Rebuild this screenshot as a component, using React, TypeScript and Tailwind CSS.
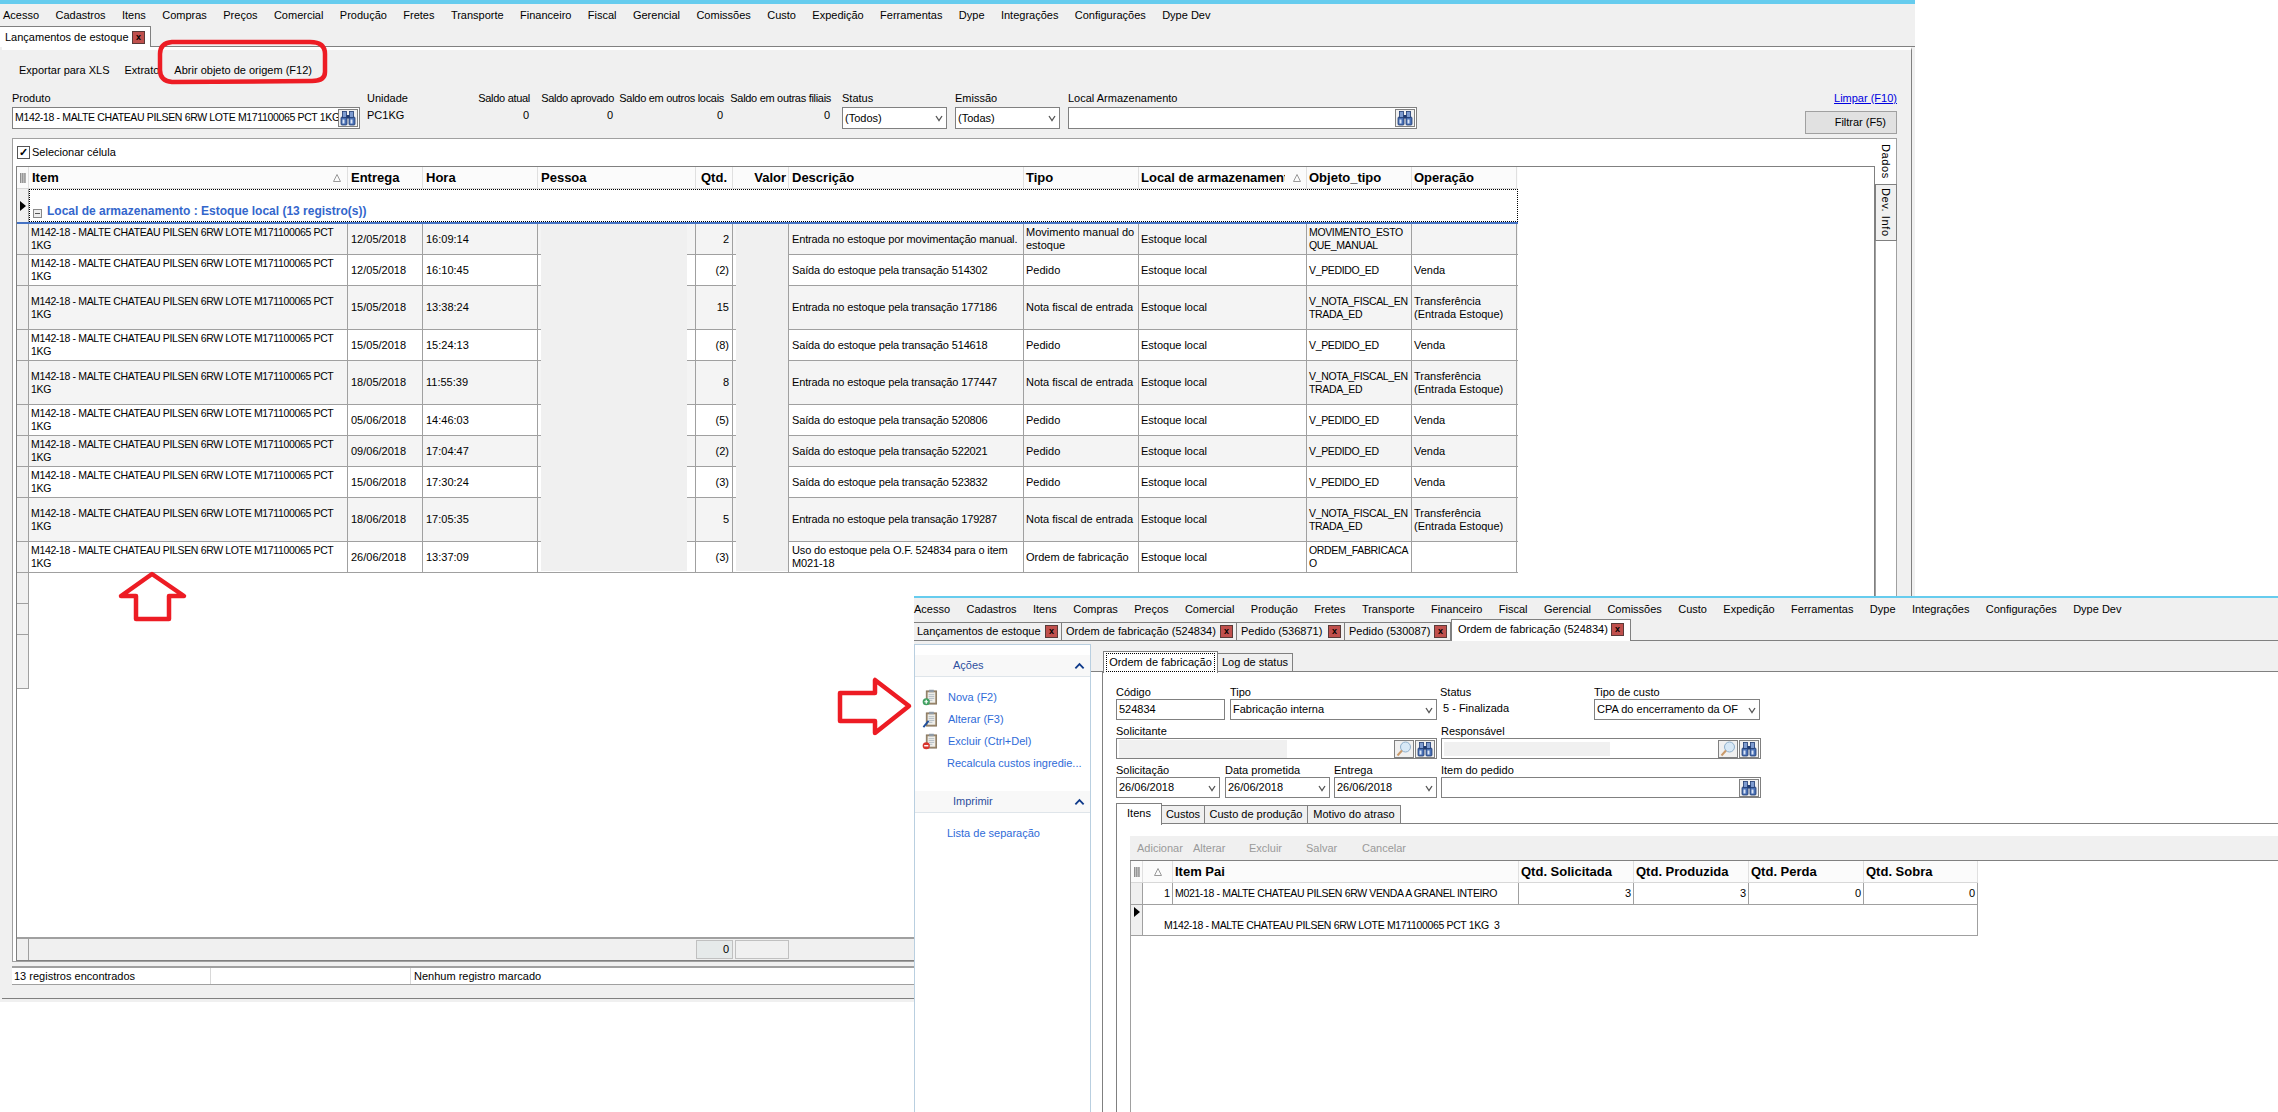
import type { ReactNode } from 'react';

const menuItems = ['Acesso', 'Cadastros', 'Itens', 'Compras', 'Preços', 'Comercial', 'Produção', 'Fretes', 'Transporte', 'Financeiro', 'Fiscal', 'Gerencial', 'Comissões', 'Custo', 'Expedição', 'Ferramentas', 'Dype', 'Integrações', 'Configurações', 'Dype Dev'];

const ITEM = 'M142-18 - MALTE CHATEAU PILSEN 6RW LOTE M171100065 PCT 1KG';

// capitals run wider in this font than in the original one
const CAPS = 'text-[10.5px] tracking-[-0.35px]';

// data of the stock grid
const rows = [
  { tall: false, date: '12/05/2018', time: '16:09:14', qty: '2', desc: 'Entrada no estoque por movimentação manual.', tipo: 'Movimento manual do estoque', obj: 'MOVIMENTO_ESTO\nQUE_MANUAL', op: '' },
  { tall: false, date: '12/05/2018', time: '16:10:45', qty: '(2)', desc: 'Saída do estoque pela transação 514302', tipo: 'Pedido', obj: 'V_PEDIDO_ED', op: 'Venda' },
  { tall: true, date: '15/05/2018', time: '13:38:24', qty: '15', desc: 'Entrada no estoque pela transação 177186', tipo: 'Nota fiscal de entrada', obj: 'V_NOTA_FISCAL_ENTRADA_ED', op: 'Transferência (Entrada Estoque)' },
  { tall: false, date: '15/05/2018', time: '15:24:13', qty: '(8)', desc: 'Saída do estoque pela transação 514618', tipo: 'Pedido', obj: 'V_PEDIDO_ED', op: 'Venda' },
  { tall: true, date: '18/05/2018', time: '11:55:39', qty: '8', desc: 'Entrada no estoque pela transação 177447', tipo: 'Nota fiscal de entrada', obj: 'V_NOTA_FISCAL_ENTRADA_ED', op: 'Transferência (Entrada Estoque)' },
  { tall: false, date: '05/06/2018', time: '14:46:03', qty: '(5)', desc: 'Saída do estoque pela transação 520806', tipo: 'Pedido', obj: 'V_PEDIDO_ED', op: 'Venda' },
  { tall: false, date: '09/06/2018', time: '17:04:47', qty: '(2)', desc: 'Saída do estoque pela transação 522021', tipo: 'Pedido', obj: 'V_PEDIDO_ED', op: 'Venda' },
  { tall: false, date: '15/06/2018', time: '17:30:24', qty: '(3)', desc: 'Saída do estoque pela transação 523832', tipo: 'Pedido', obj: 'V_PEDIDO_ED', op: 'Venda' },
  { tall: true, date: '18/06/2018', time: '17:05:35', qty: '5', desc: 'Entrada no estoque pela transação 179287', tipo: 'Nota fiscal de entrada', obj: 'V_NOTA_FISCAL_ENTRADA_ED', op: 'Transferência (Entrada Estoque)' },
  { tall: false, date: '26/06/2018', time: '13:37:09', qty: '(3)', desc: 'Uso do estoque pela O.F. 524834 para o item M021-18', tipo: 'Ordem de fabricação', obj: 'ORDEM_FABRICACAO', op: '' },
];

const stockCols = 'grid w-[1501px] grid-cols-[12px_319px_75px_115px_158px_37px_56px_235px_115px_168px_105px_105px]';
const itemCols = 'grid w-[847px] grid-cols-[12px_30px_346px_115px_115px_115px_114px]';

const Binoculars = () => (
  <svg viewBox="0 0 16 16" className="h-[16px] w-[16px]">
    <rect x="1" y="7" width="6" height="8" rx="1" fill="#4a70b5" stroke="#1f3a70" strokeWidth="0.8" />
    <rect x="9" y="7" width="6" height="8" rx="1" fill="#4a70b5" stroke="#1f3a70" strokeWidth="0.8" />
    <rect x="2.5" y="1.5" width="4" height="6" fill="#7d9bd0" stroke="#1f3a70" strokeWidth="0.8" />
    <rect x="9.5" y="1.5" width="4" height="6" fill="#7d9bd0" stroke="#1f3a70" strokeWidth="0.8" />
    <rect x="6.5" y="5" width="3" height="3.5" fill="#1f3a70" />
    <rect x="2.5" y="9.5" width="2" height="4" fill="#dbe5f6" />
    <rect x="10.5" y="9.5" width="2" height="4" fill="#dbe5f6" />
  </svg>
);

const Lens = () => (
  <svg viewBox="0 0 16 16" className="h-[16px] w-[16px]">
    <circle cx="9.5" cy="6" r="5" fill="#d7e8f6" stroke="#8fb0cc" strokeWidth="1" />
    <line x1="6" y1="9.5" x2="1.5" y2="14.5" stroke="#c99a6b" strokeWidth="2" />
  </svg>
);

const IconButton = ({ children }: { children: ReactNode }) => (
  <span className="flex h-[18px] w-[20px] shrink-0 items-center justify-center border border-[#808080] bg-[#f0f0f0]">{children}</span>
);

const CloseBox = () => (
  <span className="flex h-[13px] w-[13px] shrink-0 items-center justify-center border border-[#5a3a38] bg-[#c0504d] text-[9px] font-bold leading-none text-black">x</span>
);

const Chevron = () => (
  <svg viewBox="0 0 8 8" className="h-[8px] w-[8px] shrink-0">
    <path d="M1 2 L4 6.5 L7 2" fill="none" stroke="#555" strokeWidth="1.3" />
  </svg>
);

const CurrentRow = () => (
  <svg viewBox="0 0 6 10" className="h-[10px] w-[6px]">
    <polygon points="0,0 6,5 0,10" fill="#000" />
  </svg>
);

const RowsIcon = () => (
  <svg viewBox="0 0 8 10" className="h-[10px] w-[8px]">
    <path d="M1 1h6M1 3h6M1 5h6M1 7h6M1 9h6" stroke="#222" strokeWidth="1" strokeDasharray="1.5 0.6" fill="none" />
  </svg>
);

const SortMark = () => (
  <svg viewBox="0 0 8 8" className="h-[8px] w-[8px] shrink-0">
    <polygon points="4,0.5 7.5,7.5 0.5,7.5" fill="none" stroke="#999" strokeWidth="1" />
  </svg>
);

const Clipboard = ({ badge }: { badge: 'add' | 'edit' | 'remove' }) => (
  <svg viewBox="0 0 18 18" className="h-[17px] w-[17px] shrink-0">
    <rect x="4.5" y="2" width="11" height="14" fill="#a08c70" stroke="#7d6c54" strokeWidth="0.8" />
    <rect x="6" y="3.5" width="8" height="11" fill="#eeeeea" />
    <rect x="7.5" y="0.8" width="5" height="2.6" fill="#8f9aa5" />
    <path d="M7 6h6M7 8h6M7 10h6M7 12h4" stroke="#a5b0bb" strokeWidth="0.8" />
    {badge === 'add' && (
      <>
        <circle cx="4.5" cy="13.5" r="3.8" fill="#3fa060" />
        <path d="M2.5 13.5h4M4.5 11.5v4" stroke="#fff" strokeWidth="1.3" />
      </>
    )}
    {badge === 'edit' && <path d="M1.5 17 L7 10.5" stroke="#1f4e9c" strokeWidth="2" />}
    {badge === 'remove' && (
      <>
        <circle cx="4.5" cy="13.5" r="3.8" fill="#d8342c" />
        <path d="M2.3 13.5h4.4" stroke="#fff" strokeWidth="1.5" />
      </>
    )}
  </svg>
);

const SideHeader = ({ title }: { title: string }) => (
  <div className="flex h-[22px] items-center justify-between border-b border-[#dfe5ea] bg-[#f8f8f8] pl-[38px] pr-[5px] text-[#2d4f9e]">
    <span>{title}</span>
    <svg viewBox="0 0 12 8" className="h-[8px] w-[11px]">
      <path d="M1.5 6.5 L6 2 L10.5 6.5" fill="none" stroke="#0f3a8a" strokeWidth="2" />
    </svg>
  </div>
);

const Input = ({ children, className }: { children?: ReactNode; className: string }) => (
  <div className={`flex items-center border border-[#808080] bg-white pl-[2px] ${className}`}>{children}</div>
);

const Combo = ({ value, className }: { value: string; className: string }) => (
  <Input className={`justify-between pr-[3px] ${className}`}>
    <span className="whitespace-nowrap">{value}</span>
    <Chevron />
  </Input>
);

const Labeled = ({ label, className, children }: { label: string; className: string; children: ReactNode }) => (
  <div className={`flex flex-col ${className}`}>
    <div className="flex h-[14px] items-center whitespace-nowrap">{label}</div>
    {children}
  </div>
);

const Saldo = ({ label, className }: { label: string; className: string }) => (
  <div className={`flex flex-col items-end pr-[1px] ${className}`}>
    <div className="flex h-[16px] items-center whitespace-nowrap tracking-[-0.3px]">{label}</div>
    <div className="mt-[1px] flex h-[16px] items-center pr-[1px]">0</div>
  </div>
);

const StockRow = ({ row, index }: { row: (typeof rows)[number]; index: number }) => {
  const shaded = index % 2 === 0;
  const cell = 'flex items-center border-r border-[#a0a0a0] pl-[2px] leading-[13px]';
  return (
    <div className={`${stockCols} border-b border-[#a0a0a0] ${row.tall ? 'h-[44px]' : 'h-[31px]'} ${shaded ? 'bg-[#f4f4f4]' : 'bg-white'}`}>
      <div className="border-r border-[#a0a0a0] bg-[#f0f0f0]" />
      <div className={`${cell} ${CAPS}`}>{ITEM}</div>
      <div className={`${cell} pl-[3px]`}>{row.date}</div>
      <div className={`${cell} pl-[3px]`}>{row.time}</div>
      <div className={cell} />
      <div className={`${cell} justify-end pr-[3px]`}>{row.qty}</div>
      <div className={cell} />
      <div className={`${cell} pl-[3px] tracking-[-0.15px]`}>{row.desc}</div>
      <div className={cell}>{row.tipo}</div>
      <div className={cell}>Estoque local</div>
      <div className={`${cell} ${CAPS}`}>
        <span className="whitespace-pre-line break-all">{row.obj}</span>
      </div>
      <div className={cell}>{row.op}</div>
    </div>
  );
};

const StockWindow = () => (
  <div className="flex h-[1002px] w-[1915px] flex-col border-t-4 border-[#66ccee] bg-[#f0f0f0]">
    <div className="flex h-[22px] items-center gap-[16.4px] pl-[3px]">
      {menuItems.map((m) => (
        <span key={m}>{m}</span>
      ))}
    </div>
    <div className="flex h-[21px] border-b border-[#808080]">
      <div className="flex h-[21px] w-[151px] items-center justify-between border-r border-t border-[#808080] bg-white pl-[5px] pr-[5px]">
        <span>Lançamentos de estoque</span>
        <CloseBox />
      </div>
    </div>
    <div className="mb-[3px] mr-[3px] ml-[2px] flex flex-1 flex-col border-b border-r border-[#808080] border-t-[3px] border-t-white">
      <div className="flex h-[40px] items-center pl-[17px]">
        <span>Exportar para XLS</span>
        <span className="ml-[15px]">Extrato</span>
        <span className="ml-[15px]">Abrir objeto de origem (F12)</span>
      </div>
      <div className="flex h-[44px] pl-[10px] pr-[14px]">
        <div className="flex w-[355px] flex-col">
          <div className="flex h-[16px] items-center">Produto</div>
          <Input className="mt-[1px] h-[22px] w-[348px] justify-between pr-[1px]">
            <span className={`overflow-hidden whitespace-nowrap ${CAPS}`}>{ITEM}</span>
            <IconButton><Binoculars /></IconButton>
          </Input>
        </div>
        <div className="flex w-[110px] flex-col">
          <div className="flex h-[16px] items-center">Unidade</div>
          <div className="mt-[1px] flex h-[16px] items-center">PC1KG</div>
        </div>
        <Saldo label="Saldo atual" className="w-[54px]" />
        <Saldo label="Saldo aprovado" className="w-[84px]" />
        <Saldo label="Saldo em outros locais" className="w-[110px]" />
        <Saldo label="Saldo em outras filiais" className="w-[107px]" />
        <div className="ml-[10px] flex w-[113px] flex-col">
          <div className="flex h-[16px] items-center">Status</div>
          <Combo value="(Todos)" className="mt-[1px] h-[22px] w-[105px]" />
        </div>
        <div className="flex w-[113px] flex-col">
          <div className="flex h-[16px] items-center">Emissão</div>
          <Combo value="(Todas)" className="mt-[1px] h-[22px] w-[105px]" />
        </div>
        <div className="flex w-[349px] flex-col">
          <div className="flex h-[16px] items-center">Local Armazenamento</div>
          <Input className="mt-[1px] h-[22px] justify-end pr-[1px]">
            <IconButton><Binoculars /></IconButton>
          </Input>
        </div>
        <div className="flex flex-1 flex-col items-end">
          <a className="flex h-[16px] items-center text-[#0000e0] underline">Limpar (F10)</a>
          <div className="mt-[5px] flex h-[23px] w-[92px] items-center justify-end border border-[#a0a0a0] bg-[#e1e1e1] pr-[10px]">Filtrar (F5)</div>
        </div>
      </div>
      <div className="ml-[10px] mr-[14px] mt-[4px] flex h-[824px] border-t border-b border-[#a0a0a0] bg-white">
        <div className="flex min-w-0 flex-1 flex-col border-l border-[#a0a0a0] pl-[3px]">
          <div className="flex h-[27px] items-center gap-[2px] pl-[1px]">
            <span className="flex h-[13px] w-[13px] items-center justify-center border border-[#555] bg-white text-[11px] font-bold leading-none">✓</span>
            <span>Selecionar célula</span>
          </div>
          <div className="flex min-h-0 flex-1 flex-col border border-[#808080]">
            <div className={`${stockCols} h-[22px] border-b border-[#d8d8d8] bg-[#fbfbfb] text-[13px] font-bold`}>
              <div className="flex items-center justify-center border-r border-[#e0e0e0]"><RowsIcon /></div>
              <div className="flex items-center justify-between border-r border-[#e0e0e0] pl-[3px] pr-[6px]">Item <SortMark /></div>
              <div className="flex items-center border-r border-[#e0e0e0] pl-[3px]">Entrega</div>
              <div className="flex items-center border-r border-[#e0e0e0] pl-[3px]">Hora</div>
              <div className="flex items-center border-r border-[#e0e0e0] pl-[3px]">Pessoa</div>
              <div className="flex items-center border-r border-[#e0e0e0] pl-[5px]">Qtd.</div>
              <div className="flex items-center justify-end border-r border-[#e0e0e0] pr-[2px]">Valor</div>
              <div className="flex items-center border-r border-[#e0e0e0] pl-[3px]">Descrição</div>
              <div className="flex items-center border-r border-[#e0e0e0] pl-[2px]">Tipo</div>
              <div className="flex items-center justify-between overflow-hidden whitespace-nowrap border-r border-[#e0e0e0] pl-[2px] pr-[5px]"><span className="w-[144px] overflow-hidden">Local de armazenamento</span><SortMark /></div>
              <div className="flex items-center border-r border-[#e0e0e0] pl-[2px]">Objeto_tipo</div>
              <div className="flex items-center border-r border-[#e0e0e0] pl-[2px]">Operação</div>
            </div>
            <div className="flex h-[35px] w-[1501px] border-b-2 border-[#4472c4]">
              <div className="flex w-[12px] items-center justify-center border-r border-[#a0a0a0] bg-[#f0f0f0]"><CurrentRow /></div>
              <div className="flex flex-1 items-end gap-[5px] border border-dotted border-black pb-[1px] pl-[3px] text-[12px] font-bold text-[#3366cc]">
                <span className="mb-[2px] flex h-[9px] w-[9px] items-center justify-center border border-[#888] bg-[#eee]">
                  <span className="h-px w-[5px] bg-[#555]" />
                </span>
                Local de armazenamento : Estoque local (13 registro(s))
              </div>
            </div>
            <div className="relative">
              {rows.map((row, i) => (
                <StockRow key={row.date + row.time} row={row} index={i} />
              ))}
              {/* names and values blanked out in the original capture */}
              <div className="absolute left-[524px] top-0 bottom-[2px] w-[146px] bg-[#f0f0f0]" />
              <div className="absolute left-[719px] top-0 bottom-[2px] w-[52px] bg-[#f0f0f0]" />
            </div>
            <div className="flex w-[12px] flex-1 flex-col">
              <div className="h-[31px] border-b border-r border-[#a0a0a0] bg-[#f0f0f0]" />
              <div className="h-[31px] border-b border-r border-[#a0a0a0] bg-[#f0f0f0]" />
              <div className="h-[54px] border-b border-r border-[#a0a0a0] bg-[#f0f0f0]" />
            </div>
            <div className="h-[23px] border-t-2 border-[#a0a0a0] bg-[#f0f0f0]">
              <div className={stockCols}>
                <div className="h-[21px] border-r border-[#a0a0a0]" />
                <div className="col-span-4" />
                <div className="mt-[1px] flex h-[19px] items-center justify-end border border-[#c0c0c0] bg-[#e6eaea] pr-[3px]">0</div>
                <div className="ml-[2px] mt-[1px] h-[19px] border border-[#c0c0c0]" />
              </div>
            </div>
          </div>
        </div>
        <div className="flex w-[22px] shrink-0 flex-col">
          <div className="flex h-[45px] items-center justify-center whitespace-nowrap border-r border-[#a0a0a0] bg-white tracking-[0.6px] [writing-mode:vertical-rl]">Dados</div>
          <div className="flex h-[57px] items-center justify-center whitespace-nowrap border border-[#808080] bg-[#f0f0f0] tracking-[0.6px] [writing-mode:vertical-rl]">Dev. Info</div>
          <div className="flex-1 border-x border-[#a0a0a0]" />
        </div>
      </div>
      <div className="ml-[10px] mr-[14px] mt-[4px] flex h-[19px] items-center border-y border-t-2 border-[#a0a0a0] bg-white">
        <div className="flex h-full w-[199px] items-center border-r border-[#d8d8d8] pl-[2px]">13 registros encontrados</div>
        <div className="flex h-full w-[200px] items-center border-r border-[#d8d8d8]" />
        <div className="pl-[3px]">Nenhum registro marcado</div>
      </div>
    </div>
  </div>
);

const ProductionWindow = () => (
  <div className="absolute left-[914px] top-[596px] right-0 bottom-0 flex flex-col border-t-2 border-[#66ccee] bg-white">
    <div className="flex h-[22px] items-center gap-[16.4px] bg-[#f0f0f0]">
      {menuItems.map((m) => (
        <span key={m}>{m}</span>
      ))}
    </div>
    <div className="flex h-[21px] items-end border-b border-[#808080] bg-[#f0f0f0]">
      <div className="flex h-[18px] w-[148px] items-center justify-between border-r border-t border-[#808080] pl-[3px] pr-[3px]">Lançamentos de estoque<CloseBox /></div>
      <div className="flex h-[18px] w-[175px] items-center justify-between border-r border-t border-[#808080] pl-[4px] pr-[3px]">Ordem de fabricação (524834)<CloseBox /></div>
      <div className="flex h-[18px] w-[108px] items-center justify-between border-r border-t border-[#808080] pl-[4px] pr-[3px]">Pedido (536871)<CloseBox /></div>
      <div className="flex h-[18px] w-[106px] items-center justify-between border-r border-t border-[#808080] pl-[4px] pr-[3px]">Pedido (530087)<CloseBox /></div>
      <div className="-mb-px flex h-[22px] w-[180px] items-center justify-between border-x border-t border-[#808080] bg-white px-[6px] pb-[3px]">Ordem de fabricação (524834)<CloseBox /></div>
    </div>
    <div className="h-[3px] bg-[#f0f0f0]" />
    <div className="flex min-h-0 flex-1">
      <div className="w-[177px] shrink-0 border-x border-t border-[#b9cfe0] bg-white pt-[10px]">
        <SideHeader title="Ações" />
        <div className="flex flex-col pl-[7px] pt-[9px] text-[#2f6bd8]">
          <div className="flex h-[22px] items-center gap-[9px]"><Clipboard badge="add" />Nova (F2)</div>
          <div className="flex h-[22px] items-center gap-[9px]"><Clipboard badge="edit" />Alterar (F3)</div>
          <div className="flex h-[22px] items-center gap-[9px]"><Clipboard badge="remove" />Excluir (Ctrl+Del)</div>
          <div className="flex h-[22px] items-center whitespace-nowrap pl-[25px]">Recalcula custos ingredie...</div>
        </div>
        <div className="mt-[17px]">
          <SideHeader title="Imprimir" />
        </div>
        <div className="pl-[32px] pt-[12px] text-[#2f6bd8]">Lista de separação</div>
      </div>
      <div className="flex min-w-0 flex-1 flex-col">
        <div className="flex h-[28px] items-end border-b border-[#808080] bg-[#f0f0f0] pl-[12px]">
          <div className="-mb-[2px] flex h-[22px] w-[115px] items-center justify-center border-x border-t border-[#808080] bg-white">
            <span className="border border-dotted border-black px-[2px]">Ordem de fabricação</span>
          </div>
          <div className="flex h-[18px] w-[75px] items-center justify-center border-r border-t border-[#808080]">Log de status</div>
        </div>
        <div className="ml-[11px] flex min-h-0 flex-1 flex-col border-l border-[#808080] pl-[13px]">
          <div className="flex pt-[13px]">
            <Labeled label="Código" className="w-[114px]"><Input className="h-[21px] w-[109px]">524834</Input></Labeled>
            <Labeled label="Tipo" className="w-[210px]"><Combo value="Fabricação interna" className="h-[21px] w-[207px]" /></Labeled>
            <Labeled label="Status" className="w-[154px]"><div className="flex h-[18px] items-center pl-[3px]">5 - Finalizada</div></Labeled>
            <Labeled label="Tipo de custo" className="w-[166px]"><Combo value="CPA do encerramento da OF" className="h-[21px] w-[166px]" /></Labeled>
          </div>
          <div className="flex pt-[4px]">
            <Labeled label="Solicitante" className="w-[325px]">
              <Input className="h-[21px] w-[321px] justify-between gap-[1px] pl-0 pr-[1px]">
                <div className="mr-auto h-[18px] w-[168px] bg-[#f0f0f0]" />
                <IconButton><Lens /></IconButton>
                <IconButton><Binoculars /></IconButton>
              </Input>
            </Labeled>
            <Labeled label="Responsável" className="w-[320px]">
              <Input className="h-[21px] w-[320px] justify-between gap-[1px] pr-[1px]">
                <div className="mr-auto h-[14px] w-[166px] bg-[#f0f0f0]" />
                <IconButton><Lens /></IconButton>
                <IconButton><Binoculars /></IconButton>
              </Input>
            </Labeled>
          </div>
          <div className="flex pt-[4px]">
            <Labeled label="Solicitação" className="w-[109px]"><Combo value="26/06/2018" className="h-[21px] w-[104px]" /></Labeled>
            <Labeled label="Data prometida" className="w-[109px]"><Combo value="26/06/2018" className="h-[21px] w-[105px]" /></Labeled>
            <Labeled label="Entrega" className="w-[107px]"><Combo value="26/06/2018" className="h-[21px] w-[103px]" /></Labeled>
            <Labeled label="Item do pedido" className="w-[320px]">
              <Input className="h-[21px] w-[320px] justify-end pr-[1px]">
                <IconButton><Binoculars /></IconButton>
              </Input>
            </Labeled>
          </div>
          <div className="mt-[5px] flex h-[21px] items-end border-b border-[#808080]">
            <div className="-mb-[2px] flex h-[22px] w-[46px] items-center justify-center border-x border-t border-[#808080] bg-white pb-[3px]">Itens</div>
            <div className="flex h-[18px] w-[43px] items-center justify-center border-r border-t border-[#808080] bg-[#f0f0f0]">Custos</div>
            <div className="flex h-[18px] w-[103px] items-center justify-center border-r border-t border-[#808080] bg-[#f0f0f0]">Custo de produção</div>
            <div className="flex h-[18px] w-[93px] items-center justify-center border-r border-t border-[#808080] bg-[#f0f0f0]">Motivo do atraso</div>
          </div>
          <div className="flex min-h-0 flex-1 flex-col border-l border-[#808080] pl-[13px]">
            <div className="mt-[12px] flex h-[25px] items-center border-b border-[#808080] bg-[#f0f0f0] pl-[7px] text-[#9a9a9a]">
              <span className="w-[56px]">Adicionar</span>
              <span className="w-[56px]">Alterar</span>
              <span className="w-[57px]">Excluir</span>
              <span className="w-[56px]">Salvar</span>
              <span>Cancelar</span>
            </div>
            <div className="flex min-h-0 flex-1 flex-col border-l border-[#a0a0a0]">
              <div className={`${itemCols} h-[22px] border-b border-[#d8d8d8] bg-[#fbfbfb] text-[13px] font-bold`}>
                <div className="flex items-center justify-center border-r border-[#e0e0e0]"><RowsIcon /></div>
                <div className="flex items-center justify-center border-r border-[#e0e0e0]"><SortMark /></div>
                <div className="flex items-center border-r border-[#e0e0e0] pl-[2px]">Item Pai</div>
                <div className="flex items-center border-r border-[#e0e0e0] pl-[2px]">Qtd. Solicitada</div>
                <div className="flex items-center border-r border-[#e0e0e0] pl-[2px]">Qtd. Produzida</div>
                <div className="flex items-center border-r border-[#e0e0e0] pl-[2px]">Qtd. Perda</div>
                <div className="flex items-center border-r border-[#e0e0e0] pl-[2px]">Qtd. Sobra</div>
              </div>
              <div className={`${itemCols} h-[22px] border-b border-[#a0a0a0]`}>
                <div className="border-r border-[#a0a0a0] bg-[#f0f0f0]" />
                <div className="flex items-center justify-end border-r border-[#a0a0a0] pr-[2px]">1</div>
                <div className={`flex items-center whitespace-nowrap border-r border-[#a0a0a0] pl-[2px] ${CAPS}`}>M021-18 - MALTE CHATEAU PILSEN 6RW VENDA A GRANEL INTEIRO</div>
                <div className="flex items-center justify-end border-r border-[#a0a0a0] pr-[2px]">3</div>
                <div className="flex items-center justify-end border-r border-[#a0a0a0] pr-[2px]">3</div>
                <div className="flex items-center justify-end border-r border-[#a0a0a0] pr-[2px]">0</div>
                <div className="flex items-center justify-end border-r border-[#a0a0a0] pr-[2px]">0</div>
              </div>
              <div className="flex h-[31px] w-[847px] border-b border-r border-[#a0a0a0]">
                <div className="flex w-[12px] justify-center border-r border-[#a0a0a0] bg-[#f0f0f0] pt-[2px]"><CurrentRow /></div>
                <div className={`flex flex-1 items-end whitespace-pre pb-[1px] pl-[21px] ${CAPS}`}>{'M142-18 - MALTE CHATEAU PILSEN 6RW LOTE M171100065 PCT 1KG  3'}</div>
              </div>
            </div>
          </div>
        </div>
      </div>
    </div>
  </div>
);

export default function App() {
  return (
    <div className="relative h-[1112px] w-[2278px] overflow-hidden bg-white text-[11px] text-black [font-family:'Liberation_Sans',sans-serif]">
      <StockWindow />
      <ProductionWindow />
      {/* red marks painted over the capture */}
      <svg className="pointer-events-none absolute inset-0 h-[1112px] w-[2278px]" viewBox="0 0 2278 1112">
        <g fill="none" stroke="#ed1c24" strokeWidth="4.5" strokeLinejoin="round">
          <path d="M172 42 L310 42 Q325 42 325 54 L325 72 Q325 81 312 81 L172 82 Q160 81 160 70 L160 54 Q160 43 172 42 Z" />
          <path d="M152 574 L184 596 L169 596 L169 619 L136 619 L136 596 L121 596 Z" />
          <path d="M909 706 L875 680 L875 693 L840 693 L840 721 L875 721 L875 733 Z" />
        </g>
      </svg>
    </div>
  );
}
